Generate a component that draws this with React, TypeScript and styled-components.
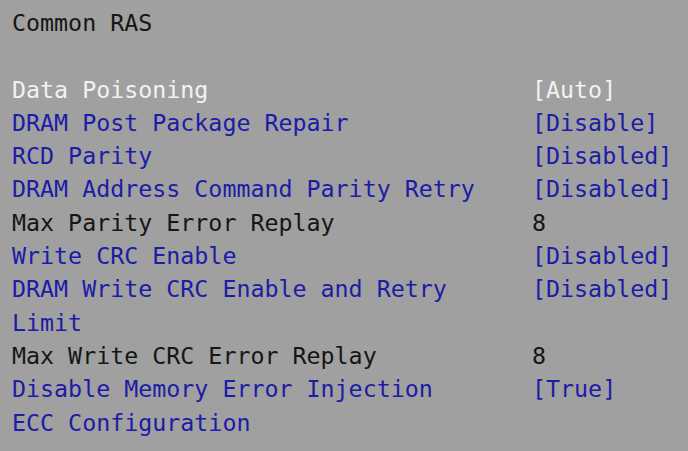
import React from "react";
import styled, { createGlobalStyle } from "styled-components";

const GlobalStyle = createGlobalStyle`
  html, body {
    margin: 0;
    padding: 0;
    background: #a0a0a0;
  }
`;

const Screen = styled.div`
  width: 688px;
  height: 451px;
  overflow: hidden;
  background: #a0a0a0;
  padding: 6px 0 0 12px;
  box-sizing: border-box;
  font-family: "DejaVu Sans Mono", "Liberation Mono", monospace;
  font-size: 23.3px;
  line-height: 33.3px;
`;

const Title = styled.div`
  color: #161616;
  margin-bottom: 33.3px;
`;

const Row = styled.div`
  display: grid;
  grid-template-columns: 520px 1fr;
`;

type Tone = "active" | "link" | "plain";

const tones: Record<Tone, string> = {
  active: "#f2f2f2",
  link: "#1c1ca6",
  plain: "#161616",
};

const Label = styled.div<{ $tone: Tone }>`
  color: ${(p) => tones[p.$tone]};
  white-space: pre-wrap;
`;

const Value = styled.div<{ $tone: Tone }>`
  color: ${(p) => tones[p.$tone]};
  white-space: pre;
`;

type Item = { label: string; value?: string; tone: Tone };

const items: Item[] = [
  { label: "Data Poisoning", value: "[Auto]", tone: "active" },
  { label: "DRAM Post Package Repair", value: "[Disable]", tone: "link" },
  { label: "RCD Parity", value: "[Disabled]", tone: "link" },
  { label: "DRAM Address Command Parity Retry", value: "[Disabled]", tone: "link" },
  { label: "Max Parity Error Replay", value: "8", tone: "plain" },
  { label: "Write CRC Enable", value: "[Disabled]", tone: "link" },
  { label: "DRAM Write CRC Enable and Retry\nLimit", value: "[Disabled]", tone: "link" },
  { label: "Max Write CRC Error Replay", value: "8", tone: "plain" },
  { label: "Disable Memory Error Injection", value: "[True]", tone: "link" },
  { label: "ECC Configuration", tone: "link" },
];

const App: React.FC = () => {
  return (
    <>
      <GlobalStyle />
      <Screen>
        <Title>Common RAS</Title>
        {items.map((it) => (
          <Row key={it.label}>
            <Label $tone={it.tone}>{it.label}</Label>
            <Value $tone={it.tone}>{it.value ?? ""}</Value>
          </Row>
        ))}
      </Screen>
    </>
  );
};

export default App;
